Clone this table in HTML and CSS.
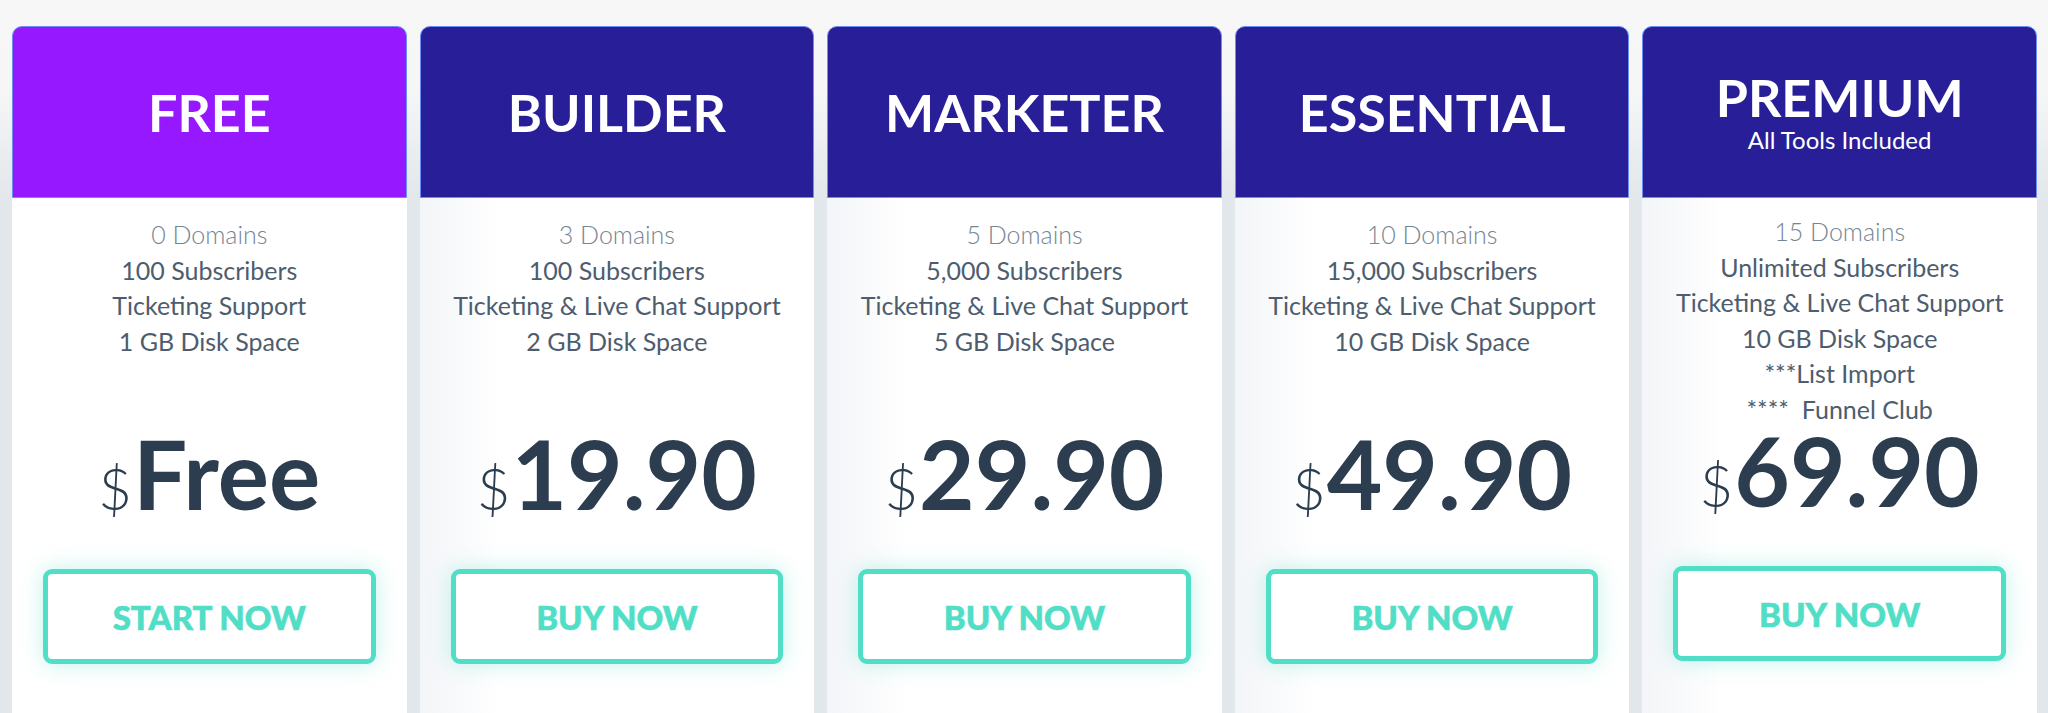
FILE: index.html
```html
<!DOCTYPE html>
<html lang="en">
<head>
  <meta charset="UTF-8" />
  <title>Pricing Plans</title>
  <link rel="stylesheet" href="styles.css">
</head>
<body>
  <div class="plans">
    <!-- Free -->
    <div class="plan plan-free">
      <div class="plan-head">
        <h2>FREE</h2>
      </div>
      <div class="plan-body">
        <ul class="features">
          <li class="domains">0 Domains</li>
          <li>100 Subscribers</li>
          <li>Ticketing Support</li>
          <li>1 GB Disk Space</li>
        </ul>
        <div class="price"><span class="currency">$</span>Free</div>
        <a class="btn" href="#">START NOW</a>
      </div>
    </div>

    <!-- Builder -->
    <div class="plan">
      <div class="plan-head">
        <h2>BUILDER</h2>
      </div>
      <div class="plan-body">
        <ul class="features">
          <li class="domains">3 Domains</li>
          <li>100 Subscribers</li>
          <li>Ticketing &amp; Live Chat Support</li>
          <li>2 GB Disk Space</li>
        </ul>
        <div class="price"><span class="currency">$</span>19.90</div>
        <a class="btn" href="#">BUY NOW</a>
      </div>
    </div>

    <!-- Marketer -->
    <div class="plan">
      <div class="plan-head">
        <h2>MARKETER</h2>
      </div>
      <div class="plan-body">
        <ul class="features">
          <li class="domains">5 Domains</li>
          <li>5,000 Subscribers</li>
          <li>Ticketing &amp; Live Chat Support</li>
          <li>5 GB Disk Space</li>
        </ul>
        <div class="price"><span class="currency">$</span>29.90</div>
        <a class="btn" href="#">BUY NOW</a>
      </div>
    </div>

    <!-- Essential -->
    <div class="plan">
      <div class="plan-head">
        <h2>ESSENTIAL</h2>
      </div>
      <div class="plan-body">
        <ul class="features">
          <li class="domains">10 Domains</li>
          <li>15,000 Subscribers</li>
          <li>Ticketing &amp; Live Chat Support</li>
          <li>10 GB Disk Space</li>
        </ul>
        <div class="price"><span class="currency">$</span>49.90</div>
        <a class="btn" href="#">BUY NOW</a>
      </div>
    </div>

    <!-- Premium -->
    <div class="plan plan-premium">
      <div class="plan-head">
        <h2>PREMIUM</h2>
        <p class="subtitle">All Tools Included</p>
      </div>
      <div class="plan-body">
        <ul class="features">
          <li class="domains">15 Domains</li>
          <li>Unlimited Subscribers</li>
          <li>Ticketing &amp; Live Chat Support</li>
          <li>10 GB Disk Space</li>
          <li>***List Import</li>
          <li>****&nbsp; Funnel Club</li>
        </ul>
        <div class="price"><span class="currency">$</span>69.90</div>
        <a class="btn" href="#">BUY NOW</a>
      </div>
    </div>
  </div>
</body>
</html>
```

FILE: styles.css
```css
body {
  margin: 0;
  height: 713px;
  overflow: hidden;
  font-family: 'Lato', 'Open Sans', sans-serif;
  background: linear-gradient(#f7f7f7 0, #f6f6f7 90px, #e2e7eb 200px);
}

.plans {
  display: flex;
  gap: 13px;
  height: 713px;
  box-sizing: border-box;
  padding: 26px 11px 0 12px;
}

.plan {
  flex: 1;
  display: flex;
  flex-direction: column;
}

.plan-head {
  height: 172px;
  box-sizing: border-box;
  border: 1.5px solid #6a8ef2;
  border-radius: 10px 10px 0 0;
  background-color: #281f98;
  color: white;
  display: flex;
  flex-direction: column;
  justify-content: center;
  align-items: center;
}

.plan-free .plan-head {
  background-color: #9518fe;
}

.plan-head h2 {
  margin: 0;
  font-size: 52px;
  font-weight: bold;
  line-height: 56px;
}

.plan-head .subtitle {
  margin: 0;
  font-size: 24px;
  line-height: 30px;
}

.plan-body {
  flex: 1;
  padding: 19px 31px 0;
  background: linear-gradient(90deg, #f3f5f8, #fff 80px);
}

.plan-free .plan-body {
  background: #fff;
}

.plan-premium .plan-body {
  padding-top: 16px;
}

.features {
  list-style: none;
  margin: 0;
  padding: 0;
  min-height: 216px;
  text-align: center;
  font-size: 25px;
  line-height: 35.5px;
  color: #4d5d6e;
}

.features .domains {
  font-weight: 300;
  color: #768594;
}

.price {
  text-align: center;
  font-size: 96px;
  font-weight: bold;
  line-height: 80px;
  color: #2d3d50;
}

.currency {
  font-size: 58px;
  font-weight: 300;
  line-height: 0;
  margin-right: 1px;
  -webkit-text-stroke: 0;
}

.btn {
  display: flex;
  justify-content: center;
  align-items: center;
  height: 95px;
  box-sizing: border-box;
  margin-top: 56px;
  border: 5px solid #50dec6;
  border-radius: 9px;
  background: #fff;
  box-shadow: 0 0 22px rgba(80, 222, 198, 0.35);
  color: #50dec6;
  font-size: 33px;
  font-weight: 900;
  -webkit-text-stroke: 0.6px #50dec6;
  text-decoration: none;
}
```
